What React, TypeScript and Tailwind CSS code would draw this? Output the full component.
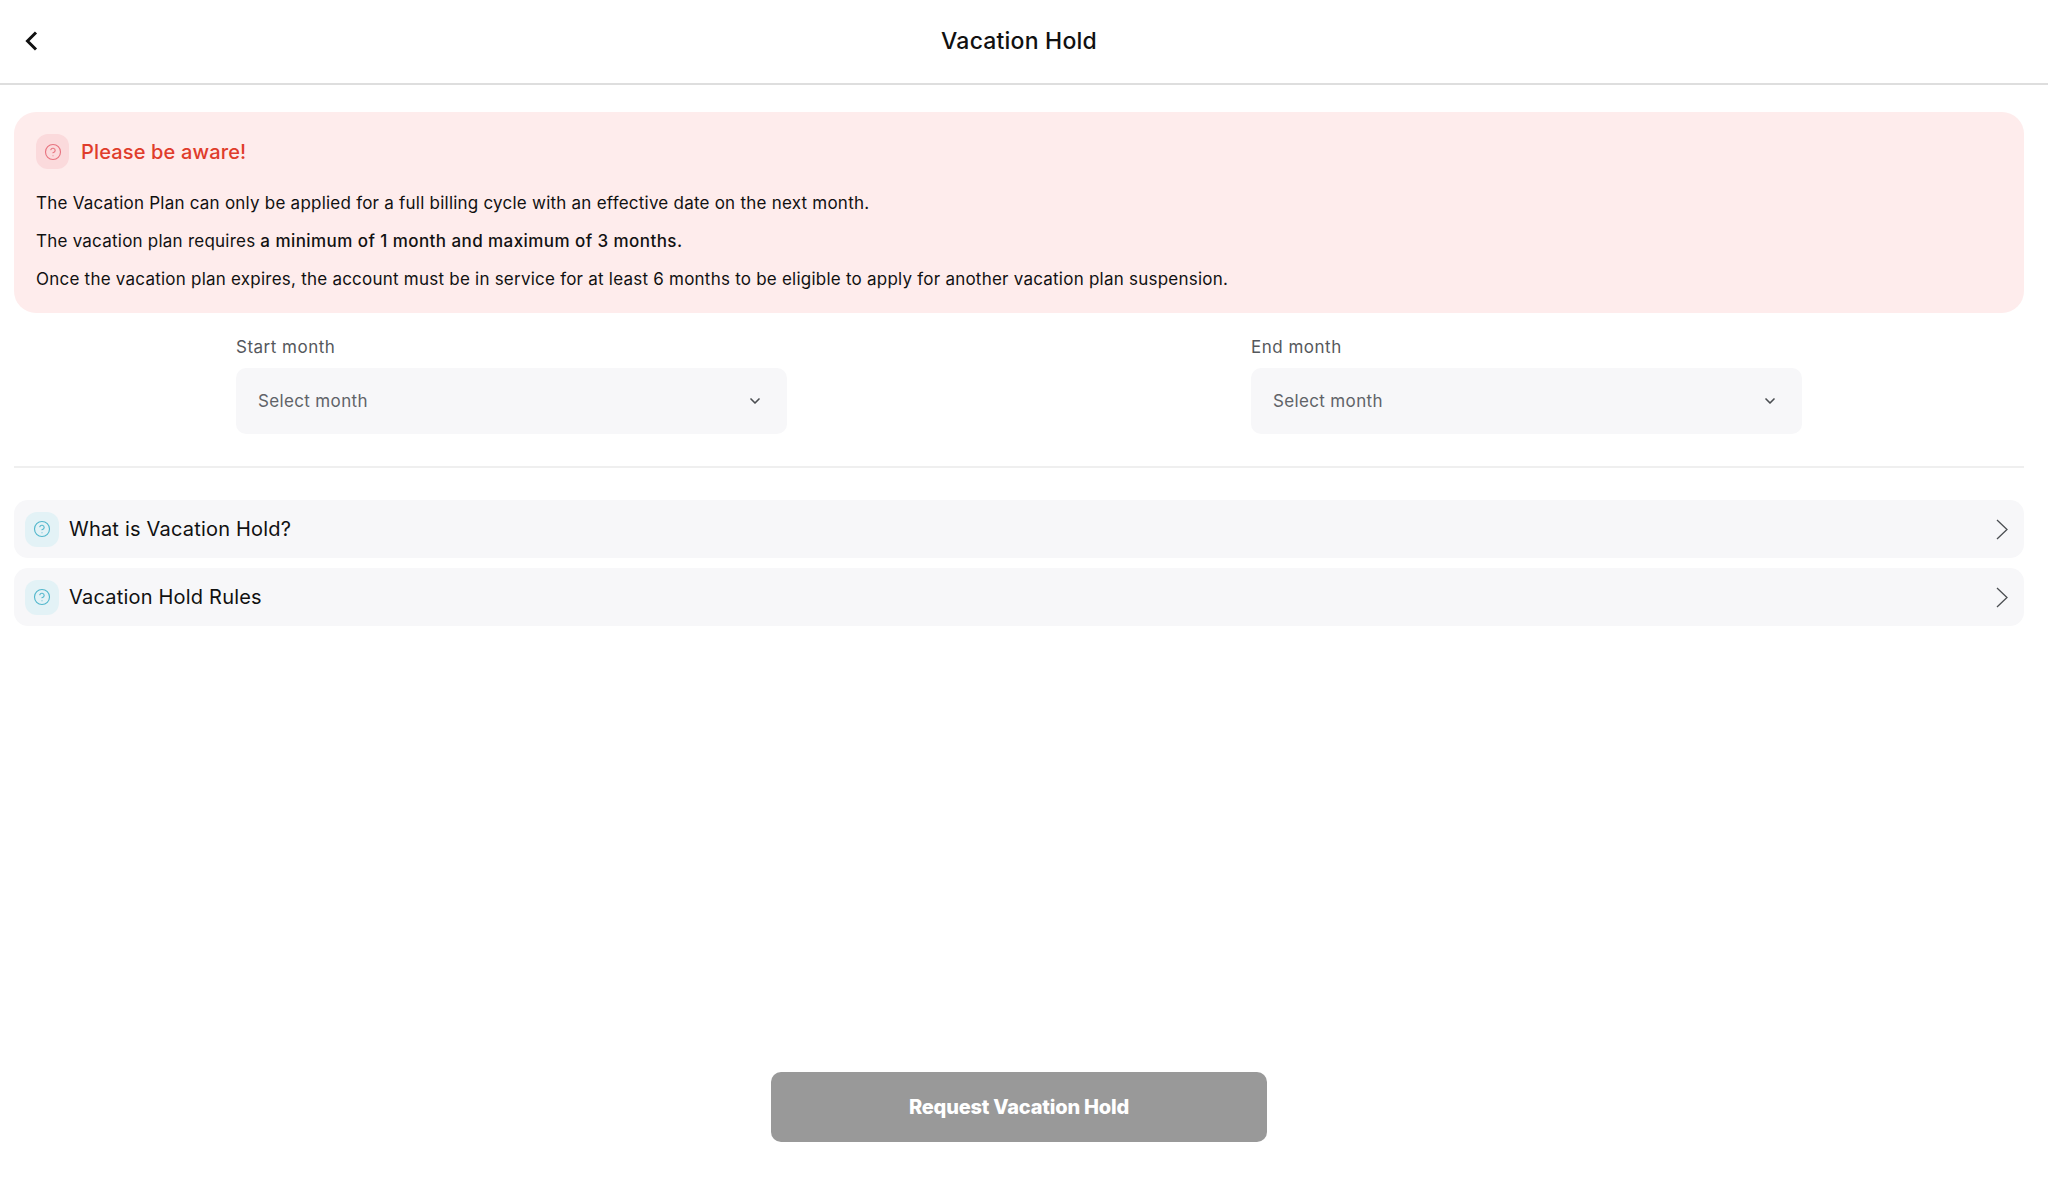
import { ChevronDown, CircleHelp } from 'lucide-react';

const font = "font-['Inter','Liberation_Sans',sans-serif]";

function MonthSelect({ label }: { label: string }) {
  return (
    <div className="w-[551px]">
      <label className="block h-[33px] text-[17px] leading-[24px] tracking-[0.5px] text-[#55585c]">{label}</label>
      <div className="flex h-[66px] items-center justify-between rounded-[10px] bg-[#f7f7f9] pl-[22px] pr-[24px]">
        <span className="pt-[1px] text-[17px] tracking-[0.35px] text-[#606368]">Select month</span>
        <ChevronDown className="h-[16px] w-[16px] text-[#4b4e52]" strokeWidth={2.5} />
      </div>
    </div>
  );
}

function InfoRow({ title }: { title: string }) {
  return (
    <div className="flex h-[58px] items-center rounded-[14px] bg-[#f7f7f9] pl-[11px] pr-[16px]">
      <div className="flex h-[35px] w-[34px] items-center justify-center rounded-[12px] bg-[#e3f2f6]">
        <CircleHelp className="h-[18px] w-[18px] text-[#52b7cc]" strokeWidth={1.5} />
      </div>
      <span className="ml-[10px] flex-1 text-[20px] tracking-[0.2px] text-[#111111]">{title}</span>
      <svg width="12" height="21" viewBox="0 0 12 21" fill="none" stroke="#4b4e52" strokeWidth="1.3">
        <path d="M1 1l10 9.5L1 20" />
      </svg>
    </div>
  );
}

export default function App() {
  return (
    <div className={`flex h-screen flex-col bg-white pr-[10px] ${font}`}>
      {/* Header */}
      <header className="relative -mr-[10px] flex h-[85px] shrink-0 items-center justify-center border-b-2 border-[#dedede] pr-[10px]">
        <svg className="absolute left-[25px] top-[31px]" width="13" height="20" viewBox="0 0 13 20" fill="none" stroke="#111111" strokeWidth="3">
          <path d="M11 1.5L2.5 10l8.5 8.5" />
        </svg>
        <h1 className="text-[23px] font-medium tracking-[0.2px] text-[#111111]">Vacation Hold</h1>
      </header>

      <main className="flex-1 px-[14px] pt-[27px]">
        {/* Warning */}
        <section className="h-[201px] rounded-[22px] bg-[#feecec] px-[22px] pt-[22px]">
          <div className="flex h-[35px] items-center">
            <div className="flex h-[35px] w-[33px] items-center justify-center rounded-[12px] bg-[#fbdadc]">
              <CircleHelp className="h-[18px] w-[18px] text-[#e8737f]" strokeWidth={1.5} />
            </div>
            <span className="ml-[12px] text-[20px] font-medium tracking-[0.15px] text-[#e03c2b]">Please be aware!</span>
          </div>
          <div className="mt-[22px] flex flex-col gap-[14px] text-[17px] leading-[24px] tracking-[0.23px] text-[#111111]">
            <p>The Vacation Plan can only be applied for a full billing cycle with an effective date on the next month.</p>
            <p>
              The vacation plan requires <span className="font-medium tracking-[0.43px]">a minimum of 1 month and maximum of 3 months.</span>
            </p>
            <p>Once the vacation plan expires, the account must be in service for at least 6 months to be eligible to apply for another vacation plan suspension.</p>
          </div>
        </section>

        {/* Month pickers */}
        <div className="mt-[22px] flex justify-between px-[222px]">
          <MonthSelect label="Start month" />
          <MonthSelect label="End month" />
        </div>

        <div className="mt-[32px] border-t-2 border-[#efefef]" />

        {/* Info */}
        <div className="mt-[32px] flex flex-col gap-[10px]">
          <InfoRow title="What is Vacation Hold?" />
          <InfoRow title="Vacation Hold Rules" />
        </div>
      </main>

      <footer className="flex justify-center pb-[44px]">
        <button className="h-[70px] w-[496px] rounded-[10px] bg-[#999999] text-[20px] font-extrabold tracking-[-0.2px] text-white">
          Request Vacation Hold
        </button>
      </footer>
    </div>
  );
}
